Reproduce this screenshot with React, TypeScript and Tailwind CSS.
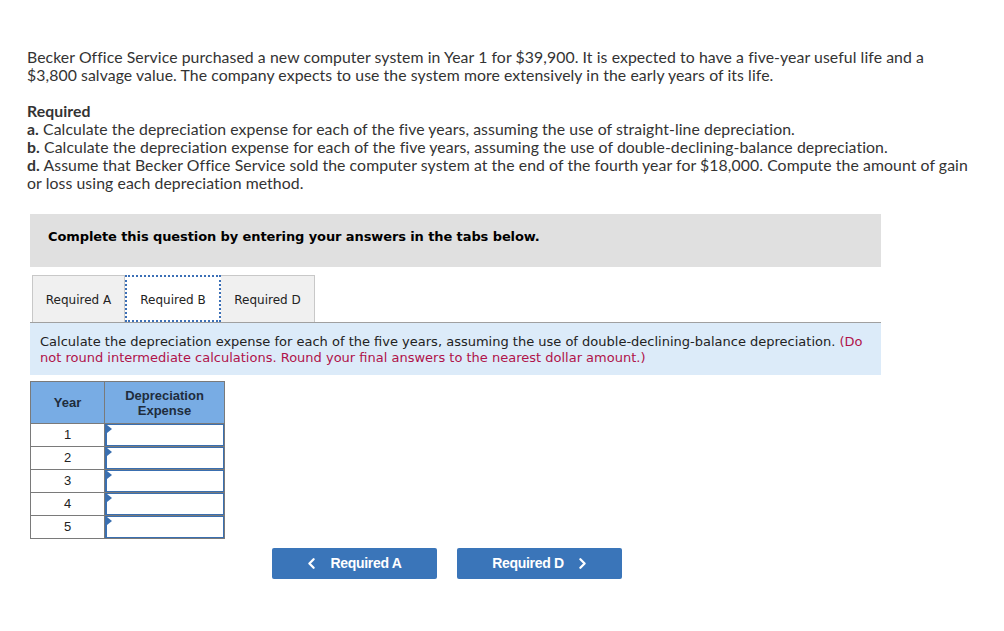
import { ChevronLeft, ChevronRight } from "lucide-react";

const body = { fontFamily: "Lato, 'Open Sans', sans-serif" };
const verdana = { fontFamily: "'DejaVu Sans', Verdana, sans-serif" };
const arial = { fontFamily: "'Liberation Sans', Arial, sans-serif" };

function AnswerRow({ year }: { year: number }) {
  return (
    <tr className="h-[23px]">
      <td className="border border-[#7a7a7a] text-center text-[13px] text-[#222]">{year}</td>
      <td className="border border-[#7a7a7a] p-0">
        <div className="relative h-[22px] border-l-2 border-t border-r border-b border-[#3a6fb0] bg-white">
          {/* little marker in the corner of each input */}
          <span className="absolute left-0 top-0 h-0 w-0 border-y-[4px] border-l-[5px] border-y-transparent border-l-[#3a6fb0]" />
        </div>
      </td>
    </tr>
  );
}

export default function App() {
  return (
    <div className="min-h-[631px] w-[1004px] bg-white pt-[48px] text-[#333]">
      <div className="pl-[27px] text-[15.8px] leading-[18px] tracking-[0.08px]" style={body}>
        <p className="whitespace-nowrap">
          Becker Office Service purchased a new computer system in Year 1 for $39,900. It is expected to have a five-year useful life and a
          <br />
          $3,800 salvage value. The company expects to use the system more extensively in the early years of its life.
        </p>
        <div className="mt-[18px] whitespace-nowrap">
          <div className="font-bold">Required</div>
          <div>
            <b>a.</b> Calculate the depreciation expense for each of the five years, assuming the use of straight-line depreciation.
          </div>
          <div>
            <b>b.</b> Calculate the depreciation expense for each of the five years, assuming the use of double-declining-balance depreciation.
          </div>
          <div>
            <b>d.</b> Assume that Becker Office Service sold the computer system at the end of the fourth year for $18,000. Compute the amount of gain
            <br />
            or loss using each depreciation method.
          </div>
        </div>
      </div>

      <div className="ml-[30px] mt-[22px] w-[851px]">
        <div className="h-[53px] bg-[#e0e0e0] pl-[18px] pt-[15px] text-[13px] font-bold leading-[16px] tracking-[-0.1px] text-black" style={verdana}>
          Complete this question by entering your answers in the tabs below.
        </div>

        <div className="mt-[8px] flex pl-[2px] text-[12px] text-[#222]" style={verdana}>
          <div className="flex h-[47px] w-[93px] items-center justify-center border border-b-0 border-[#c8c8c8] bg-[#f0f0f0] pt-[2px]">
            Required A
          </div>
          <div className="flex h-[47px] w-[96px] items-center justify-center border-2 border-dotted border-[#3b6fb6] bg-white pt-[2px]">
            Required B
          </div>
          <div className="flex h-[47px] w-[94px] items-center justify-center border border-b-0 border-l-0 border-[#c8c8c8] bg-[#f0f0f0] pt-[2px]">
            Required D
          </div>
        </div>

        <div className="border-t border-[#a0a0a0] bg-[#dcebf9] px-[10px] pb-[9px] pt-[11px] text-[13px] leading-[16px] text-[#222]" style={verdana}>
          Calculate the depreciation expense for each of the five years, assuming the use of double-declining-balance depreciation.{" "}
          <span className="text-[#b0134a]">
            (Do not round intermediate calculations. Round your final answers to the nearest dollar amount.)
          </span>
        </div>

        <table className="mt-[6px] border-collapse" style={arial}>
          <thead>
            <tr className="h-[42px] bg-[#78ace4] text-[13px] font-bold leading-[15px] text-[#1f2d3d]">
              <th className="w-[74px] border border-[#7a7a7a] font-bold">Year</th>
              <th className="w-[120px] border border-[#7a7a7a] font-bold">
                Depreciation
                <br />
                Expense
              </th>
            </tr>
          </thead>
          <tbody>
            {[1, 2, 3, 4, 5].map((y) => (
              <AnswerRow key={y} year={y} />
            ))}
          </tbody>
        </table>

        <div className="mt-[9px] flex gap-[20px] pl-[242px]" style={arial}>
          <button className="flex h-[31px] w-[165px] items-center justify-center gap-[10px] rounded-[2px] bg-[#3a75b9] pr-[4px] text-[14px] font-bold tracking-[-0.3px] text-white">
            <ChevronLeft size={17} strokeWidth={3.2} />
            Required A
          </button>
          <button className="flex h-[31px] w-[165px] items-center justify-center gap-[10px] rounded-[2px] bg-[#3a75b9] pl-[4px] text-[14px] font-bold tracking-[-0.3px] text-white">
            Required D
            <ChevronRight size={17} strokeWidth={3.2} />
          </button>
        </div>
      </div>
    </div>
  );
}
